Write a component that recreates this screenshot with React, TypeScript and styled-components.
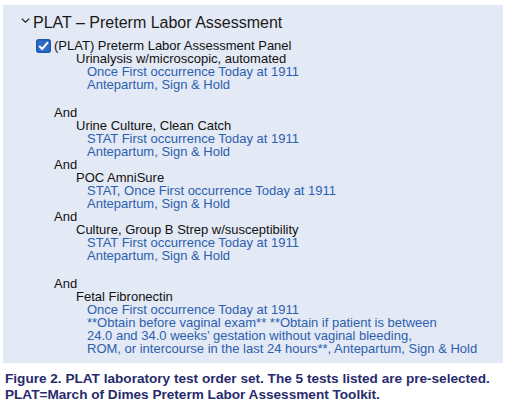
import React from 'react'
import styled, { createGlobalStyle } from 'styled-components'

const GlobalStyle = createGlobalStyle`
  body {
    margin: 0;
    background: #ffffff;
    font-family: "Liberation Sans", Arial, sans-serif;
  }
`

type TestItem = {
  name: string
  details: string[]
  gapAfter?: boolean
}

const tests: TestItem[] = [
  {
    name: 'Urinalysis w/microscopic, automated',
    details: ['Once First occurrence Today at 1911', 'Antepartum, Sign & Hold'],
    gapAfter: true
  },
  {
    name: 'Urine Culture, Clean Catch',
    details: ['STAT First occurrence Today at 1911', 'Antepartum, Sign & Hold']
  },
  {
    name: 'POC AmniSure',
    details: ['STAT, Once First occurrence Today at 1911', 'Antepartum, Sign & Hold']
  },
  {
    name: 'Culture, Group B Strep w/susceptibility',
    details: ['STAT First occurrence Today at 1911', 'Antepartum, Sign & Hold'],
    gapAfter: true
  },
  {
    name: 'Fetal Fibronectin',
    details: [
      'Once First occurrence Today at 1911',
      '**Obtain before vaginal exam** **Obtain if patient is between',
      '24.0 and 34.0 weeks\u2019 gestation without vaginal bleeding,',
      'ROM, or intercourse in the last 24 hours**, Antepartum, Sign & Hold'
    ]
  }
]

const Chevron = () => (
  <svg width="9" height="5" viewBox="0 0 9 5">
    <polyline points="0.8,0.8 4.5,4.2 8.2,0.8" fill="none" stroke="#222222" strokeWidth="1.2" />
  </svg>
)

const CheckMark = () => (
  <svg width="15" height="14" viewBox="0 0 15 14">
    <rect x="0.75" y="0.75" width="13.5" height="12.5" rx="2" fill="#2f6bc4" stroke="#1f58ae" strokeWidth="1.5" />
    <polyline points="3.2,7 6.2,10 12,3.2" fill="none" stroke="#ffffff" strokeWidth="2" />
  </svg>
)

export default function App () {
  return (
    <Figure>
      <GlobalStyle />
      <OrderPanel>
        <SetTitle>
          <ChevronBox><Chevron /></ChevronBox>
          PLAT – Preterm Labor Assessment
        </SetTitle>
        <Order>
          <CheckBox><CheckMark /></CheckBox>
          <OrderBody>
            <Line>(PLAT) Preterm Labor Assessment Panel</Line>
            {tests.map((t, i) => (
              <React.Fragment key={t.name}>
                {i > 0 && <Line>And</Line>}
                <TestBlock>
                  <Line>{t.name}</Line>
                  <Details>
                    {t.details.map(d => <Line key={d} $blue>{d}</Line>)}
                  </Details>
                </TestBlock>
                {t.gapAfter && <Gap />}
              </React.Fragment>
            ))}
          </OrderBody>
        </Order>
      </OrderPanel>
      <Caption>
        <span>Figure 2. PLAT laboratory test order set. The 5 tests listed are pre-selected.</span>
        <span>PLAT=March of Dimes Preterm Labor Assessment Toolkit.</span>
      </Caption>
    </Figure>
  )
}

const Figure = styled.div`
  width: 506px;
  height: 412px;
  padding: 5px 3px 0 3px;
  box-sizing: border-box;
`

const OrderPanel = styled.section`
  height: 358px;
  box-sizing: border-box;
  padding: 8px 0 0 18px;
  background-color: #e3e9f5;
`

const SetTitle = styled.h2`
  margin: 0;
  display: flex;
  align-items: center;

  font-size: 16px;
  font-weight: 400;
  line-height: 20px;
  color: #1a1a1a;
`

const ChevronBox = styled.span`
  display: flex;
  width: 12px;
  margin-top: -5px;
`

const Order = styled.div`
  display: flex;
  align-items: flex-start;
  margin-top: 6px;
  padding-left: 15px;
`

const CheckBox = styled.span`
  display: flex;
  width: 18px;
`

const OrderBody = styled.div`
  display: flex;
  flex-direction: column;
`

const TestBlock = styled.div`
  padding-left: 22px;
`

const Details = styled.div`
  padding-left: 11px;
`

const Line = styled.div<{ $blue?: boolean }>`
  font-size: 13px;
  line-height: 13px;
  white-space: nowrap;
  color: ${p => (p.$blue ? '#2d5fae' : '#111111')};
`

const Gap = styled.div`
  height: 15px;
`

const Caption = styled.p`
  margin: 8px 0 0 2px;
  display: flex;
  flex-direction: column;

  font-size: 13.6px;
  font-weight: 700;
  line-height: 16px;
  white-space: nowrap;
  color: #272a6b;
`
